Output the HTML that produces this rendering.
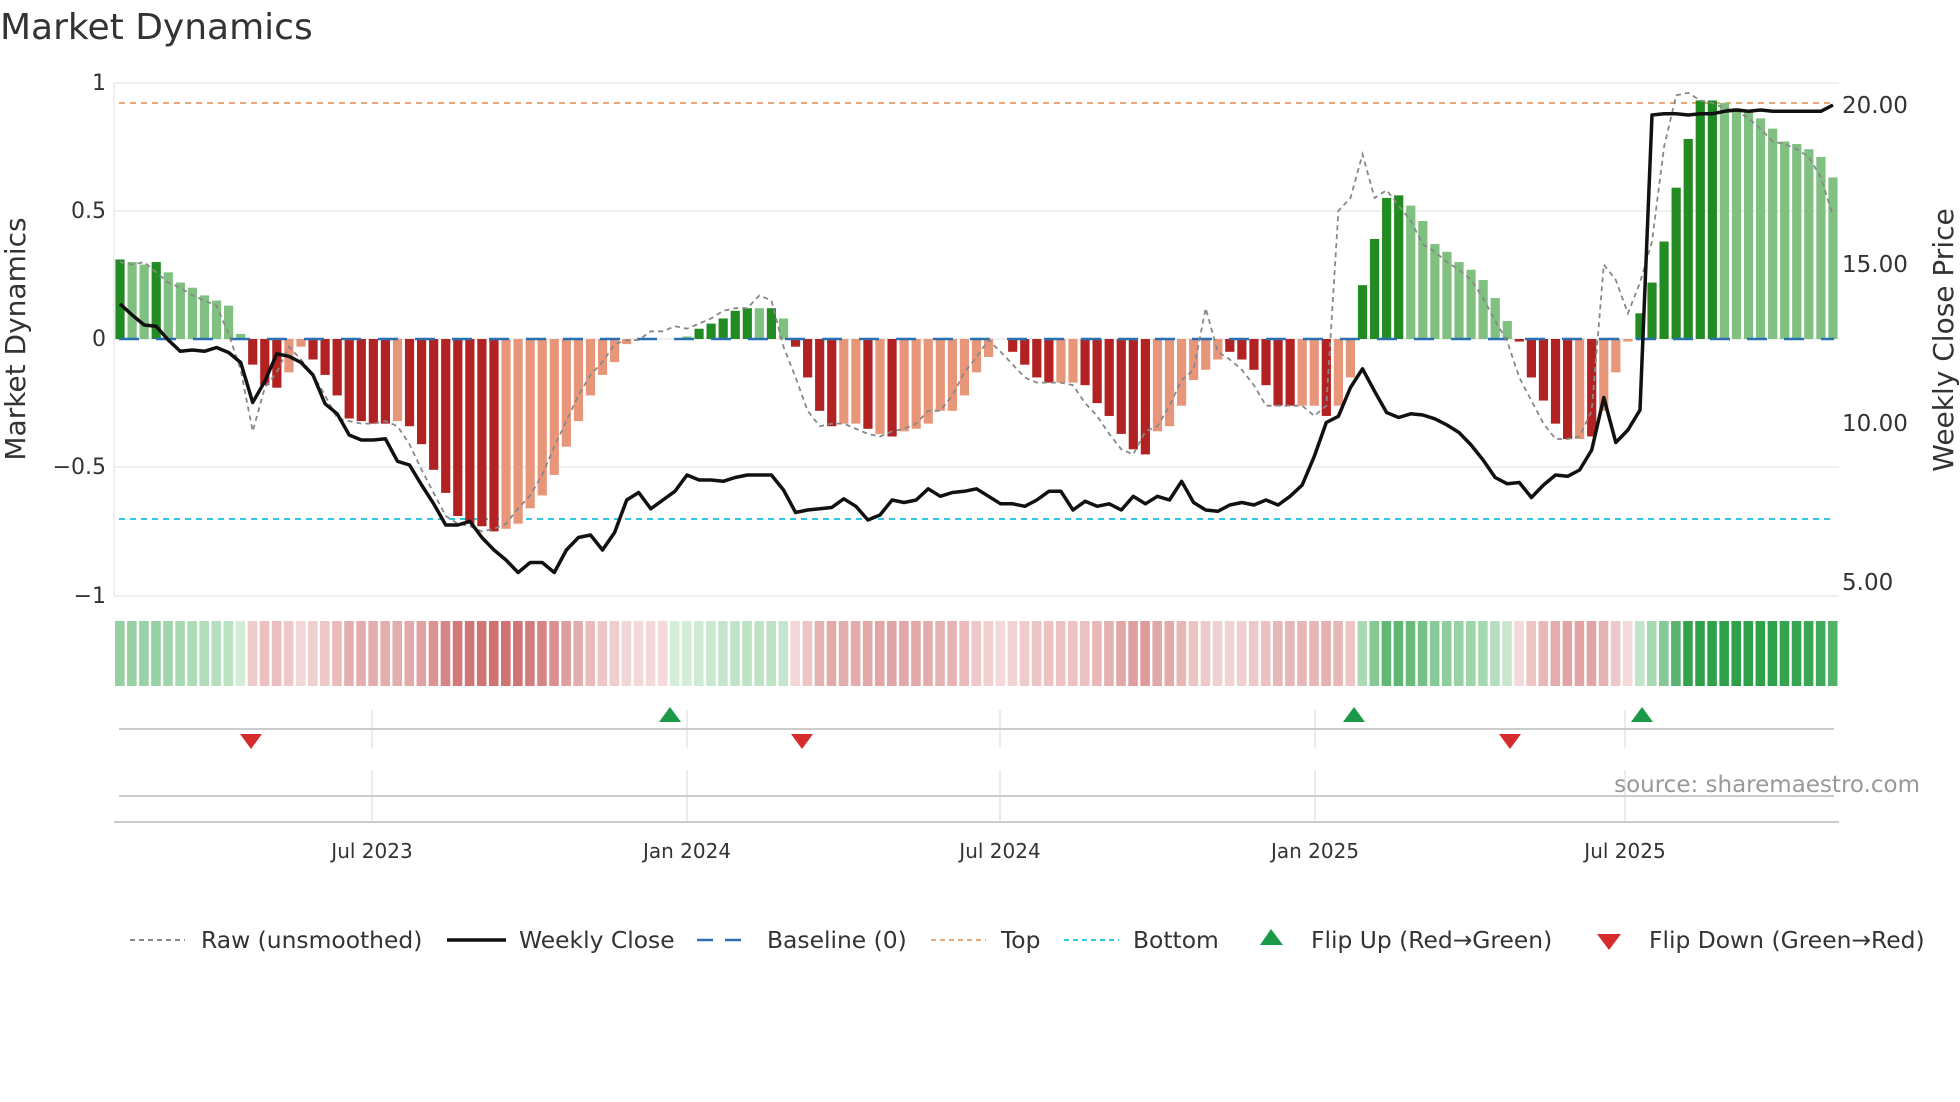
<!DOCTYPE html>
<html><head><meta charset="utf-8"><style>
html,body{margin:0;padding:0;background:#fff;}
svg{display:block;font-family:"DejaVu Sans","Liberation Sans",sans-serif;}
</style></head><body>
<svg id="s" width="1960" height="1102" viewBox="0 0 1960 1102" xmlns="http://www.w3.org/2000/svg">
<rect width="1960" height="1102" fill="#fff"/>
<text x="0" y="39" font-size="36" fill="#333">Market Dynamics</text>
<g stroke="#ececec" stroke-width="1.5">
<line x1="114" y1="83" x2="1839" y2="83"/><line x1="114" y1="211" x2="1839" y2="211"/>
<line x1="114" y1="339" x2="1839" y2="339"/><line x1="114" y1="467" x2="1839" y2="467"/>
<line x1="114" y1="596" x2="1839" y2="596"/><line x1="114" y1="83" x2="114" y2="596"/>
</g>
<g font-size="22" fill="#333" text-anchor="end">
<text x="106" y="90">1</text><text x="106" y="218">0.5</text><text x="106" y="346">0</text>
<text x="106" y="474">−0.5</text><text x="106" y="603">−1</text>
</g>
<g font-size="23" fill="#333">
<text x="1842" y="113">20.00</text><text x="1842" y="272">15.00</text>
<text x="1842" y="431">10.00</text><text x="1842" y="590">5.00</text>
</g>
<text transform="translate(25,339) rotate(-90)" font-size="28" fill="#333" text-anchor="middle">Market Dynamics</text>
<text transform="translate(1953,340) rotate(-90)" font-size="28" fill="#333" text-anchor="middle">Weekly Close Price</text>
<line x1="119" y1="103" x2="1834" y2="103" stroke="#e8a878" stroke-width="2" stroke-dasharray="6,5"/>
<line x1="119" y1="519" x2="1834" y2="519" stroke="#30c8e0" stroke-width="2" stroke-dasharray="6,5"/>
<g id="bars"></g>
<line x1="119" y1="339" x2="1834" y2="339" stroke="#2a70b0" stroke-width="2.5" stroke-dasharray="20,17"/>
<g id="heat"></g>
<g stroke="#e6e6e6" stroke-width="1.5">
<line x1="372" y1="710" x2="372" y2="748"/><line x1="687" y1="710" x2="687" y2="748"/>
<line x1="1000" y1="710" x2="1000" y2="748"/><line x1="1315" y1="710" x2="1315" y2="748"/>
<line x1="1625" y1="710" x2="1625" y2="748"/>
<line x1="372" y1="770" x2="372" y2="822"/><line x1="687" y1="770" x2="687" y2="822"/>
<line x1="1000" y1="770" x2="1000" y2="822"/><line x1="1315" y1="770" x2="1315" y2="822"/>
<line x1="1625" y1="770" x2="1625" y2="822"/>
</g>
<line x1="119" y1="729" x2="1834" y2="729" stroke="#ccc" stroke-width="2"/>
<line x1="119" y1="796" x2="1834" y2="796" stroke="#ccc" stroke-width="2"/>
<line x1="114" y1="822" x2="1839" y2="822" stroke="#ccc" stroke-width="2"/>
<g fill="#1a9a48">
<polygon points="670,707 659,722 681,722"/><polygon points="1354,707 1343,722 1365,722"/><polygon points="1642,707 1631,722 1653,722"/>
</g>
<g fill="#d62c2c">
<polygon points="251,749 240,734 262,734"/><polygon points="802,749 791,734 813,734"/><polygon points="1510,749 1499,734 1521,734"/>
</g>
<text x="1920" y="792" font-size="23" fill="#999" text-anchor="end">source: sharemaestro.com</text>
<g font-size="20" fill="#333" text-anchor="middle">
<text x="372" y="858">Jul 2023</text><text x="687" y="858">Jan 2024</text><text x="1000" y="858">Jul 2024</text>
<text x="1315" y="858">Jan 2025</text><text x="1625" y="858">Jul 2025</text>
</g>
<g font-size="23.4" fill="#333">
<line x1="130" y1="940" x2="185" y2="940" stroke="#888" stroke-width="2" stroke-dasharray="5,4"/>
<text x="201" y="948">Raw (unsmoothed)</text>
<line x1="447" y1="940" x2="506" y2="940" stroke="#111" stroke-width="3.5"/>
<text x="519" y="948">Weekly Close</text>
<line x1="697" y1="940" x2="752" y2="940" stroke="#2a70b0" stroke-width="2.5" stroke-dasharray="16,12"/>
<text x="767" y="948">Baseline (0)</text>
<line x1="931" y1="940" x2="986" y2="940" stroke="#e8a878" stroke-width="2" stroke-dasharray="5,4"/>
<text x="1001" y="948">Top</text>
<line x1="1064" y1="940" x2="1119" y2="940" stroke="#30c8e0" stroke-width="2" stroke-dasharray="5,4"/>
<text x="1133" y="948">Bottom</text>
<polygon points="1271,929 1260,945 1283,945" fill="#1a9a48"/>
<text x="1311" y="948">Flip Up (Red→Green)</text>
<polygon points="1609,950 1597,934 1621,934" fill="#d62c2c"/>
<text x="1649" y="948">Flip Down (Green→Red)</text>
</g>
<g id="lines"></g>
</svg>
<script>
var v=[0.31,0.30,0.29,0.30,0.26,0.22,0.2,0.17,0.15,0.13,0.02,-0.1,-0.18,-0.19,-0.13,-0.03,-0.08,-0.14,-0.22,-0.31,-0.32,-0.33,-0.33,-0.32,-0.34,-0.41,-0.51,-0.6,-0.69,-0.72,-0.73,-0.75,-0.74,-0.72,-0.66,-0.61,-0.53,-0.42,-0.32,-0.22,-0.14,-0.09,-0.02,-0.005,-0.004,-0.003,0.004,0.01,0.04,0.06,0.08,0.11,0.12,0.12,0.12,0.08,-0.03,-0.15,-0.28,-0.34,-0.33,-0.33,-0.35,-0.37,-0.38,-0.36,-0.35,-0.33,-0.28,-0.28,-0.22,-0.13,-0.07,-0.004,-0.05,-0.1,-0.15,-0.17,-0.17,-0.17,-0.18,-0.25,-0.3,-0.37,-0.43,-0.45,-0.36,-0.34,-0.26,-0.16,-0.12,-0.08,-0.05,-0.08,-0.12,-0.18,-0.26,-0.26,-0.26,-0.26,-0.3,-0.26,-0.15,0.21,0.39,0.55,0.56,0.52,0.46,0.37,0.34,0.3,0.27,0.23,0.16,0.07,-0.01,-0.15,-0.24,-0.33,-0.39,-0.39,-0.38,-0.28,-0.13,-0.01,0.1,0.22,0.38,0.59,0.78,0.93,0.93,0.92,0.9,0.89,0.86,0.82,0.77,0.76,0.74,0.71,0.63];
var darkList=[0,3,11,12,13,16,17,18,19,20,21,22,24,25,26,27,28,29,30,31,48,49,50,51,52,54,56,57,58,59,62,64,74,75,76,77,80,81,82,83,84,85,92,93,94,95,96,97,100,103,104,105,106,116,117,118,119,120,122,126,127,128,129,130,131,132];
var dark={};darkList.forEach(function(k){dark[k]=1;});
var py=[243,252,260,261,272,281,280,281,278,282,290,322,305,283,285,290,300,323,331,348,352,352,351,369,372,388,403,420,420,417,430,440,448,458,450,450,458,440,430,428,440,426,400,394,407,400,393,380,384,384,385,382,380,380,380,392,410,408,407,406,399,405,416,412,400,402,400,391,397,394,393,392,391,397,403,403,405,400,393,393,408,401,405,403,408,397,403,397,400,385,402,408,409,404,402,404,400,404,397,388,365,338,333,310,295,313,330,334,331,332,335,340,346,356,368,382,387,386,398,388,380,381,376,360,318,354,344,328,92,91,91,92,91,91,89,88,89,88,89,89,89,89,89,84];
var N=v.length;
var ns="http://www.w3.org/2000/svg",W=1725/N;
function el(t,a,p){var e=document.createElementNS(ns,t);for(var k in a)e.setAttribute(k,a[k]);p.appendChild(e);return e;}
var B=document.getElementById('bars'),H=document.getElementById('heat'),L=document.getElementById('lines');
function X(i){return 114+(i+0.5)*W;}
function mix(a,b,t){var r=[];for(var k=0;k<3;k++)r.push(Math.round(a[k]+(b[k]-a[k])*t));return 'rgb('+r.join(',')+')';}
var pts=[],rp=[];
var ov={10:-0.12,11:-0.36,44:0.03,45:0.03,46:0.05,53:0.17,54:0.15,101:0.5,102:0.55,103:0.72,105:0.58,123:0.29,124:0.23,128:0.75,129:0.95,130:0.96,142:0.48,143:0.48,90:0.12};
for(var i=0;i<N;i++){
 var val=v[i],y0=339,y1=339-val*256.5,d=dark[i];
 var c=val>=0?(d?'#228b22':'#80c080'):(d?'#b22222':'#e8967a');
 if(Math.abs(val)>0.006)el('rect',{x:X(i)-4.6,y:Math.min(y0,y1),width:9.2,height:Math.max(1.5,Math.abs(y1-y0)),fill:c},B);
 var t=Math.min(1,Math.abs(val)/0.8);
 var hc=val>=0?mix([214,238,218],[46,160,74],t):mix([244,218,218],[204,106,106],t);
 el('rect',{x:X(i)-W/2+1,y:621,width:W-2.5,height:65,fill:hc},H);
 var r=(ov[i]!==undefined?ov[i]:(i<N-1?v[i+1]:0.5));
 rp.push(X(i).toFixed(1)+','+(339-r*256.5).toFixed(1));
 var pi=Math.round(i*(py.length-1)/(N-1));
 pts.push(X(i).toFixed(1)+','+(py[pi]*1.25).toFixed(1));
}
el('polyline',{points:rp.join(' '),fill:'none',stroke:'#888','stroke-width':1.8,'stroke-dasharray':'5,4'},L);
el('polyline',{points:pts.join(' '),fill:'none',stroke:'#111','stroke-width':3.5,'stroke-linejoin':'round'},L);
</script>
</body></html>
